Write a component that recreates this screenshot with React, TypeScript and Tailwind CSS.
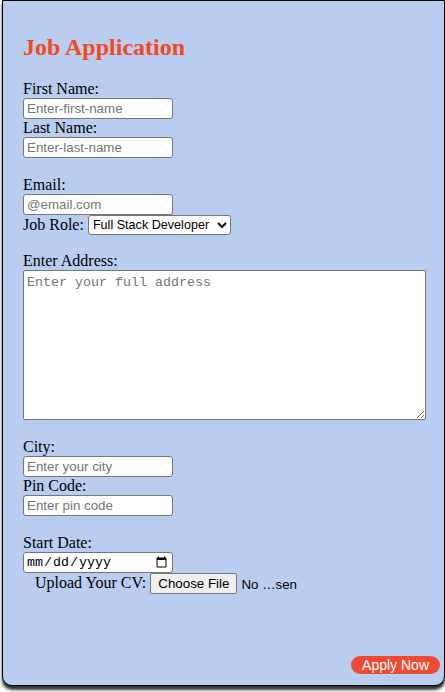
const serif = "font-['Liberation_Serif','Times_New_Roman',serif]";
const sans = "font-['Liberation_Sans',Arial,sans-serif]";

function Label({ text }: { text: string }) {
    return <label className="block h-[18px] text-[16px] leading-[18px] text-black">{text}</label>;
}

function TextInput({ placeholder }: { placeholder: string }) {
    return (
        <input
            type="text"
            placeholder={placeholder}
            className={`${sans} block w-[150px] h-[21px] px-[3px] text-[13.33px] bg-white border border-[#767676] rounded-[3px] placeholder:text-[#757575] outline-none`}
        />
    );
}

export default function App() {
    return (
        <div className="w-[445px] h-[692px] bg-white overflow-hidden">
            <div
                className={`${serif} ml-[2px] w-[443px] h-[686px] bg-[#b9cdf0] border border-black rounded-b-[10px] shadow-[0_4px_3px_rgba(0,0,0,0.8)] flex flex-col pl-[20px] pt-[32px]`}
            >
                <h2 className="h-[28px] text-[24px] leading-[28px] font-bold text-[#f2491d] mb-[19px]">
                    Job Application
                </h2>

                <Label text="First Name:" />
                <TextInput placeholder="Enter-first-name" />
                <Label text="Last Name:" />
                <TextInput placeholder="Enter-last-name" />
                <div className="h-[18px]" />
                <Label text="Email:" />
                <TextInput placeholder="@email.com" />
                <div className="flex items-start gap-[4px] h-[20px]">
                    <span className="text-[16px] leading-[18px] mt-[1px]">Job Role:</span>
                    <select
                        defaultValue="fsd"
                        className={`${sans} w-[143px] h-[20px] text-[12.6px] bg-white border border-[#767676] rounded-[3px] text-black`}
                    >
                        <option value="fsd">Full Stack Developer</option>
                        <option value="fe">Frontend Developer</option>
                        <option value="be">Backend Developer</option>
                    </select>
                </div>
                <div className="h-[17px]" />
                <Label text="Enter Address:" />
                <textarea
                    placeholder="Enter your full address"
                    className="block w-[403px] h-[150px] px-[3px] py-[2px] font-['Liberation_Mono','Courier_New',monospace] text-[13.33px] bg-white border border-[#767676] rounded-[2px] placeholder:text-[#757575] outline-none"
                />
                <div className="h-[18px]" />
                <Label text="City:" />
                <TextInput placeholder="Enter your city" />
                <Label text="Pin Code:" />
                <TextInput placeholder="Enter pin code" />
                <div className="h-[18px]" />
                <Label text="Start Date:" />
                <input
                    type="date"
                    className="block w-[150px] h-[21px] px-[2px] font-['Liberation_Mono','Courier_New',monospace] text-[13.33px] bg-white border border-[#767676] rounded-[3px] text-black"
                />
                <div className="flex items-start h-[22px] pl-[12px]">
                    <span className="text-[16px] leading-[18px] mt-[1px] mr-[4px]">Upload Your CV:</span>
                    <button
                        className={`${sans} h-[21px] px-[7px] text-[13.33px] bg-[#efefef] border border-[#767676] rounded-[2px] text-black`}
                    >
                        Choose File
                    </button>
                    <span className={`${sans} ml-[4px] mt-[2px] text-[13.33px]`}>No …sen</span>
                </div>

                <div className="flex-1" />
                <div className="flex justify-end pr-[4px] pb-[11px]">
                    <button className={`${sans} h-[18px] px-[11px] rounded-full bg-[#ef4b34] text-white text-[14px] leading-[18px]`}>
                        Apply Now
                    </button>
                </div>
            </div>
        </div>
    );
}
